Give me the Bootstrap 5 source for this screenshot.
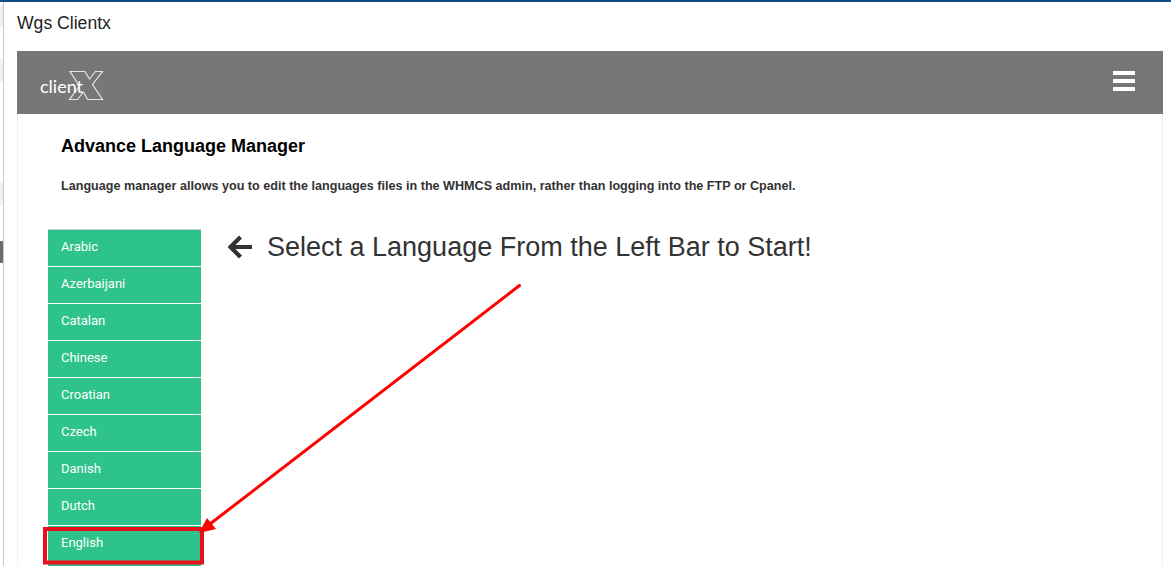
<!DOCTYPE html>
<html lang="en">
<head>
<meta charset="utf-8">
<title>Wgs Clientx</title>
<link href="https://cdn.jsdelivr.net/npm/bootstrap@5.3.0/dist/css/bootstrap.min.css" rel="stylesheet">
<style>
html,body{height:566px;overflow:hidden;background:#fff}
body{font-family:"Liberation Sans",Arial,sans-serif;position:relative;color:#333}
.top-rule{height:2px;background:#0f4c81}
.shell{height:564px}
.edge-strip{width:4px;flex:none;background:#fff;border-right:1px solid #c8c8c8;position:relative}
.edge-patch{height:22px;width:3px;background:#efefef;flex:none}
.edge-patch.one{margin-top:3px}
.edge-patch.two{margin-top:32px}
.edge-patch.three{margin-top:102px}
.edge-patch.four{margin-top:36px;background:#6b6b6b}
.work{flex:1;min-width:0;padding:0 8px 0 13px}
.page-name{font-size:17.6px;line-height:18px;padding-top:12px;height:49px;color:#222}
.brand-bar{height:63px;background:#777;padding:0 28px 0 23px}
.burger{width:22px;height:20px;margin-bottom:3px;display:flex;flex-direction:column;justify-content:space-between;padding:0;background:none;border:0}
.burger i{display:block;height:4px;background:#fff}
.sheet{border-left:1px solid #eef0f6;border-right:1px solid #eef0f6;padding:22px 0 0 30px;height:452px}
.sheet-title{font-size:18px;font-weight:700;line-height:20px;color:#000;margin:0 0 0 13px}
.sheet-text{font-size:12.600px;font-weight:700;line-height:14px;margin:23px 0 0 13px;color:#333}
.lang-area{margin-top:36px}
.lang-list{width:153px;flex:none;border-top:1px solid #ccc;border-radius:0}
.lang-item{background:#2dc38a;color:#fff;border:0;border-bottom:1px solid #fff;height:37px;padding:0 13px;line-height:33px;font-family:Roboto,sans-serif;font-size:13px;border-radius:0!important;text-decoration:none}
.list-tail{height:6px;background:#2dc38a}
.prompt{font-size:27px;line-height:30px;color:#333;margin:3px 0 0 27px;gap:15px}
.prompt svg{flex:none}
.markup{position:absolute;left:0;top:0;pointer-events:none}
</style>
</head>
<body>
<div class="top-rule"></div>
<div class="shell d-flex">
  <div class="edge-strip d-flex flex-column">
    <div class="edge-patch one"></div>
    <div class="edge-patch two"></div>
    <div class="edge-patch three"></div>
    <div class="edge-patch four"></div>
  </div>
  <div class="work">
    <div class="page-name">Wgs Clientx</div>
    <nav class="navbar brand-bar d-flex justify-content-between align-items-center flex-nowrap">
      <a class="d-block" href="#" aria-label="clientX">
        <svg width="64" height="36" viewBox="0 0 64 36" class="d-block">
          <path d="M30 6.500H45L49.500 14L55.500 6.500H62.500L52.500 19.500L62.500 34.500H47.500L43.500 27L37.500 34.500H29.500L39.500 21Z" fill="none" stroke="#e6e6e6" stroke-width="1.200"/>
          <text x="0" y="27.500" font-family="Lato,sans-serif" font-size="17" font-weight="400" fill="#fff" textLength="43" lengthAdjust="spacingAndGlyphs">client</text>
        </svg>
      </a>
      <button class="burger" type="button" aria-label="Menu"><i></i><i></i><i></i></button>
    </nav>
    <div class="sheet">
      <h1 class="sheet-title">Advance Language Manager</h1>
      <p class="sheet-text">Language manager allows you to edit the languages files in the WHMCS admin, rather than logging into the FTP or Cpanel.</p>
      <div class="lang-area d-flex align-items-start">
        <div class="list-group lang-list">
          <a href="#" class="list-group-item lang-item">Arabic</a>
          <a href="#" class="list-group-item lang-item">Azerbaijani</a>
          <a href="#" class="list-group-item lang-item">Catalan</a>
          <a href="#" class="list-group-item lang-item">Chinese</a>
          <a href="#" class="list-group-item lang-item">Croatian</a>
          <a href="#" class="list-group-item lang-item">Czech</a>
          <a href="#" class="list-group-item lang-item">Danish</a>
          <a href="#" class="list-group-item lang-item">Dutch</a>
          <a href="#" class="list-group-item lang-item">English</a>
          <div class="list-tail"></div>
        </div>
        <div class="prompt d-flex align-items-center">
          <svg width="24" height="24" viewBox="0 0 24 24"><path d="M12.500 2L2.500 12L12.500 22M3 12H24" fill="none" stroke="#333" stroke-width="4.200"/></svg>
          <span>Select a Language From the Left Bar to Start!</span>
        </div>
      </div>
    </div>
  </div>
</div>
<svg class="markup" width="1171" height="566" viewBox="0 0 1171 566">
  <rect x="45" y="529" width="157" height="33.500" fill="none" stroke="#e8101c" stroke-width="4"/>
  <path d="M519.500 285.500L210 524" stroke="#f00" stroke-width="3" fill="none" stroke-linecap="round"/>
  <path d="M199 533L207 518L216 529Z" fill="#f00"/>
</svg>
</body>
</html>
